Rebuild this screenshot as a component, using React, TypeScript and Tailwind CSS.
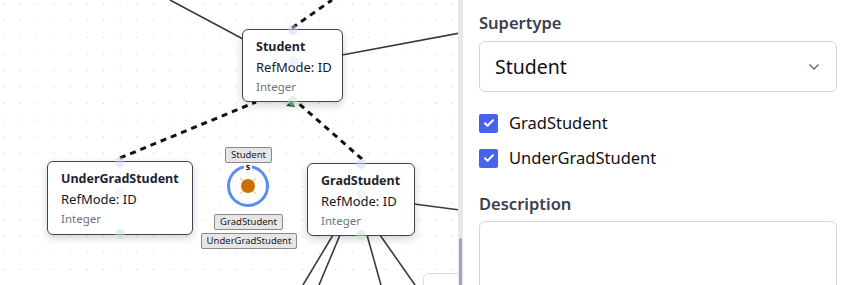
import React from "react";

const font = { fontFamily: '"Noto Sans", "Open Sans", sans-serif' };

function EntityNode({
  left,
  top,
  width,
  height,
  name,
}: {
  left: number;
  top: number;
  width: number;
  height: number;
  name: string;
}) {
  return (
    <div
      className="absolute rounded-[6px] border-[1.5px] border-[#3f4450] bg-white shadow-[0_3px_8px_rgba(0,0,0,0.18)] pl-[13px] pt-[7px]"
      style={{ left, top, width, height }}
    >
      <div className="text-[12.5px] leading-[20px] font-bold text-[#1f2430]">{name}</div>
      <div className="text-[13px] leading-[20px] text-[#111827]">RefMode: ID</div>
      <div className="text-[11.5px] leading-[20px] text-[#6b7280]">Integer</div>
      {/* handles */}
      <div className="absolute left-1/2 -top-[5px] -ml-[5px] h-[10px] w-[10px] rounded-full bg-[#c9d6f7] opacity-50" />
      <div className="absolute left-1/2 top-[26px] -ml-[5px] h-[10px] w-[10px] rounded-full bg-[#dbe4fb] opacity-40" />
      <div className="absolute left-1/2 -bottom-[5px] -ml-[5px] h-[10px] w-[10px] rounded-full bg-[#bfe3bf] opacity-50" />
    </div>
  );
}

function Tag({ left, top, width, text }: { left: number; top: number; width: number; text: string }) {
  return (
    <div
      className="absolute flex h-[16px] items-center justify-center rounded-[2px] border border-[#8a8a8a] bg-[#e6e6e6] text-[9.5px] leading-[14px] text-[#222]"
      style={{ left, top, width }}
    >
      {text}
    </div>
  );
}

export default function App() {
  return (
    <div className="flex h-[285px] w-[849px] overflow-hidden bg-white" style={font}>
      {/* Canvas */}
      <div className="relative h-full w-[458px] overflow-hidden bg-white bg-[radial-gradient(#c4c4c4_0.8px,transparent_0.9px)] bg-[length:16.6px_16.6px] bg-[position:-4.3px_-4.3px]">
        <svg className="absolute inset-0" width="458" height="285">
          <g stroke="#3a3a3a" strokeWidth="1.6" fill="none">
            <line x1="170" y1="0" x2="243" y2="39" />
            <line x1="342" y1="55" x2="460" y2="33" />
            <line x1="414" y1="204" x2="460" y2="210" />
            <line x1="333" y1="235" x2="303" y2="285" />
            <line x1="340" y1="235" x2="319" y2="285" />
            <line x1="367" y1="235" x2="381" y2="285" />
            <line x1="380" y1="235" x2="415" y2="285" />
          </g>
          <g stroke="#111" strokeWidth="3" strokeDasharray="6 5" fill="none">
            <line x1="292" y1="28" x2="332" y2="0" />
            <line x1="120" y1="158" x2="256" y2="102" />
            <line x1="362" y1="159" x2="297" y2="102" />
          </g>
          <polygon points="286,106 292,100 295,107" fill="#1e4d2b" />
        </svg>

        <EntityNode left={242} top={29} width={101} height={73} name="Student" />
        <EntityNode left={47} top={161} width={146} height={74} name="UnderGradStudent" />
        <EntityNode left={307} top={163} width={108} height={73} name="GradStudent" />

        {/* constraint circle */}
        <svg className="absolute" style={{ left: 226, top: 164 }} width="44" height="44">
          <circle cx="22" cy="22" r="19.5" stroke="#5b8def" strokeWidth="3" fill="none" />
          <g stroke="#f3cfa8" strokeWidth="1.5">
            <line x1="14" y1="14" x2="30" y2="30" />
            <line x1="30" y1="14" x2="14" y2="30" />
          </g>
          <circle cx="22" cy="22" r="7" fill="#cc6f00" />
        </svg>
        <Tag left={225} top={147} width={47} text="Student" />
        <div className="absolute left-[244px] top-[163px] h-[9px] w-[8px] bg-white text-center text-[9px] font-bold leading-[8px] text-[#111]">
          s
        </div>
        <Tag left={214} top={214} width={69} text="GradStudent" />
        <Tag left={201} top={233} width={96} text="UnderGradStudent" />

        <div className="absolute left-[423px] top-[273px] h-[30px] w-[60px] rounded-[6px] border border-[#dcdde2] bg-white" />
      </div>

      {/* Divider / scrollbar */}
      <div className="relative h-full w-[5px] bg-[#e5e7eb]">
        <div className="absolute left-[1px] top-[238px] h-[50px] w-[3px] rounded-full bg-[#a3a7b3]" />
      </div>

      {/* Panel */}
      <div className="flex flex-1 flex-col pl-[16px] pr-[12px] pt-[11px]">
        <div className="text-[16.5px] font-semibold leading-[24px] text-[#3b404d]">Supertype</div>
        <div className="mt-[6px] flex h-[51px] shrink-0 items-center justify-between rounded-[6px] border border-[#d4d6dc] bg-white pl-[15px] pr-[14px]">
          <span className="text-[19.5px] leading-[26px] text-[#111]">Student</span>
          <svg width="16" height="16" viewBox="0 0 24 24" fill="none" stroke="#6b7280" strokeWidth="2.5" strokeLinecap="round" strokeLinejoin="round">
            <path d="m6 9 6 6 6-6" />
          </svg>
        </div>
        <div className="mt-[21px] flex shrink-0 flex-col gap-[15px]">
          {["GradStudent", "UnderGradStudent"].map((t) => (
            <div key={t} className="flex items-center gap-[11px]">
              <div className="flex h-[19px] w-[19px] shrink-0 items-center justify-center rounded-[2px] bg-[#4763eb]">
                <svg width="12" height="12" viewBox="0 0 24 24" fill="none" stroke="white" strokeWidth="4" strokeLinecap="round" strokeLinejoin="round">
                  <path d="M4 12.5l5 5L20 6.5" />
                </svg>
              </div>
              <span className="text-[16.5px] leading-[20px] text-[#111]">{t}</span>
            </div>
          ))}
        </div>
        <div className="mt-[24px] shrink-0 text-[16.5px] font-semibold leading-[24px] text-[#3b404d]">Description</div>
        <div className="mt-[5px] h-[80px] shrink-0 rounded-[6px] border border-[#d4d6dc] bg-white" />
      </div>
    </div>
  );
}
